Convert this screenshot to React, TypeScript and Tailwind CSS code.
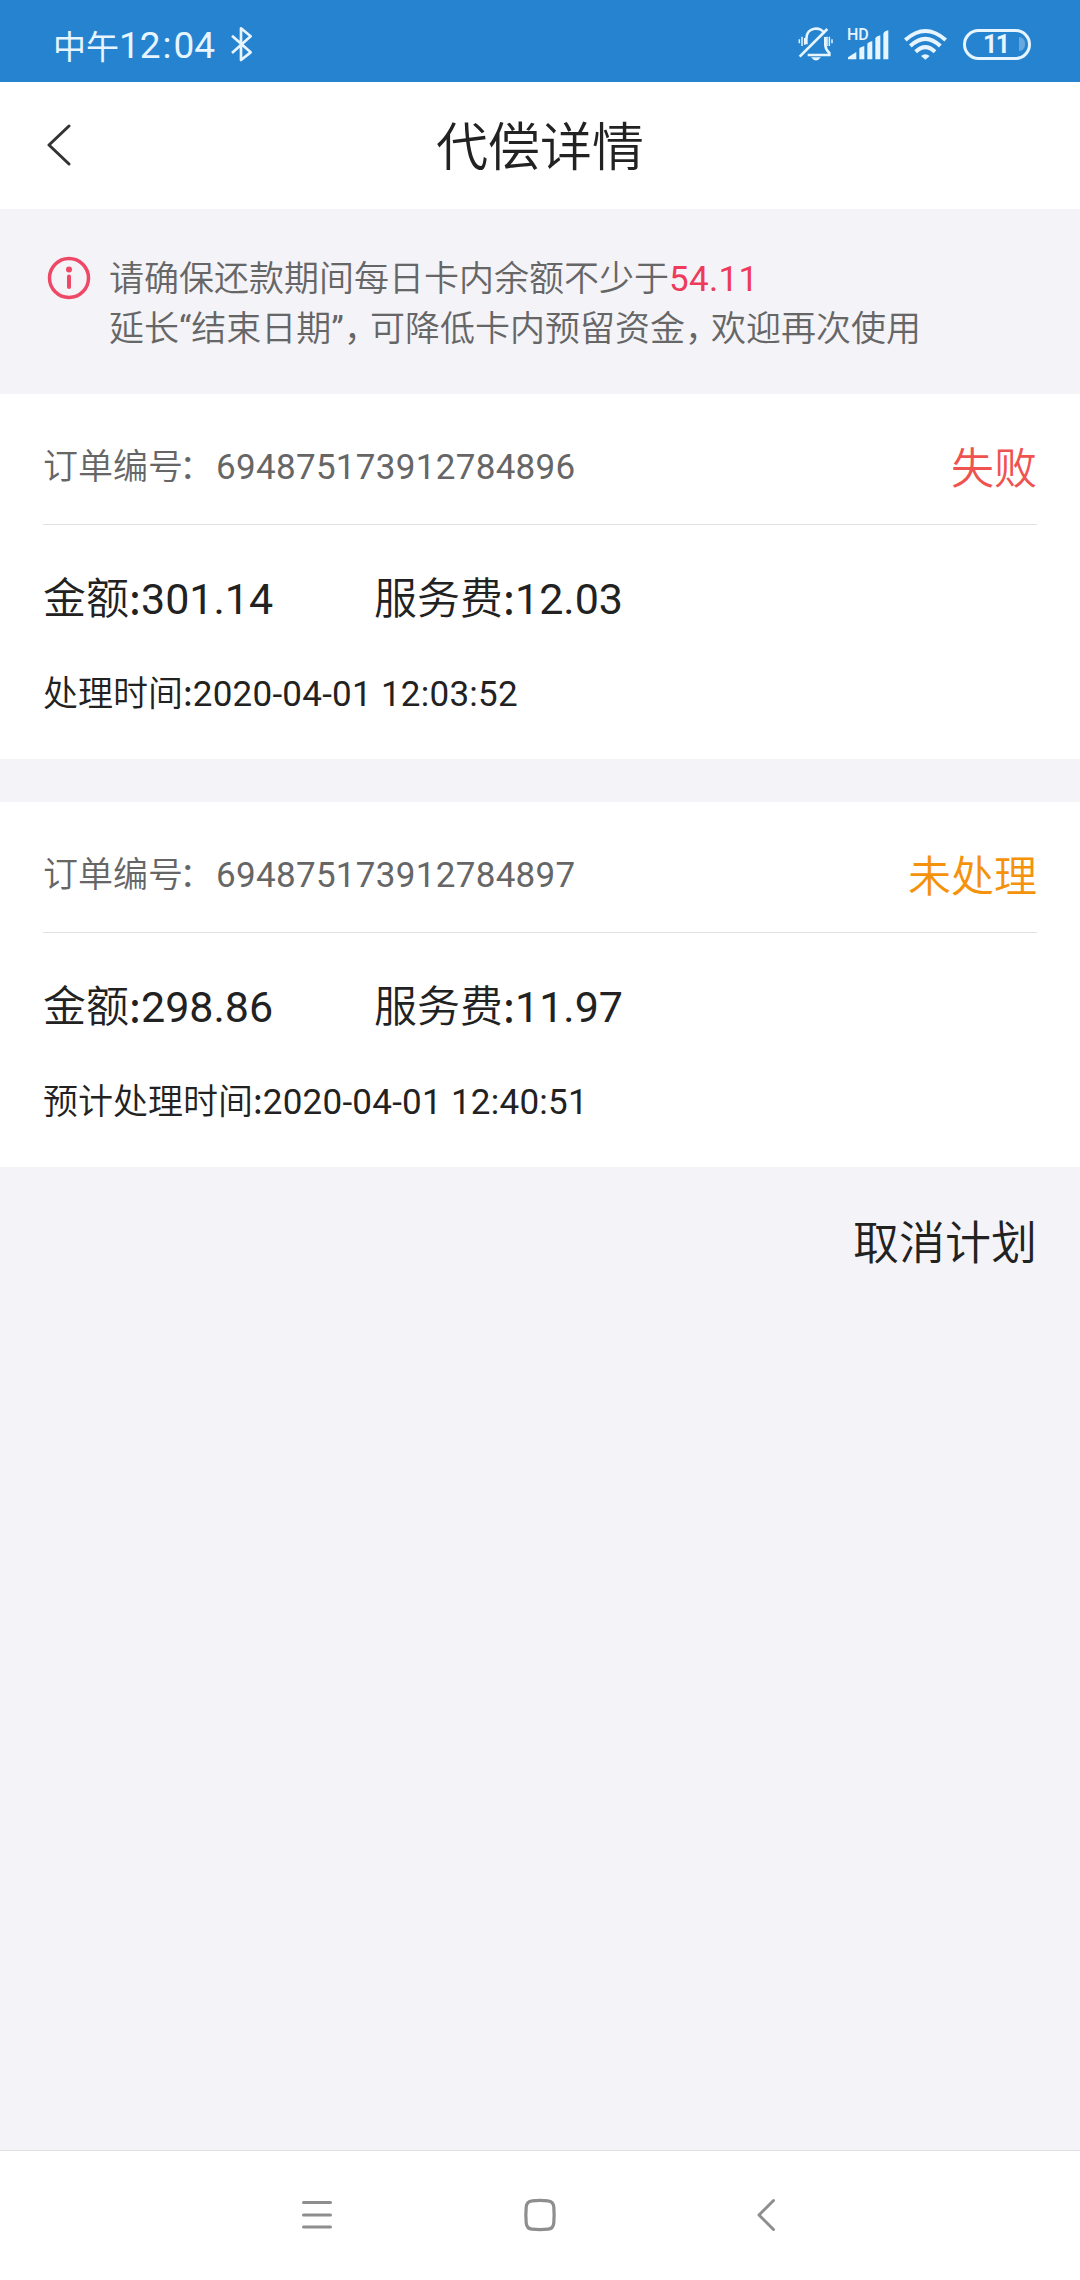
type Order = {
  id: string;
  status: string;
  statusClass: string;
  amount: string;
  fee: string;
  timeLabel: string;
  time: string;
};

const orders: Order[] = [
  {
    id: '694875173912784896',
    status: '失败',
    statusClass: 'text-[#ef5350]',
    amount: '301.14',
    fee: '12.03',
    timeLabel: '处理时间',
    time: '2020-04-01 12:03:52',
  },
  {
    id: '694875173912784897',
    status: '未处理',
    statusClass: 'text-[#f5920b]',
    amount: '298.86',
    fee: '11.97',
    timeLabel: '预计处理时间',
    time: '2020-04-01 12:40:51',
  },
];

function BluetoothIcon() {
  return (
    <svg className="h-[36px] w-[23px]" viewBox="0 0 69 108" fill="none" stroke="currentColor" strokeWidth="8" strokeLinejoin="round">
      <path d="M6 29 L62 79 L33 102 V7 L62 31 L6 81" />
    </svg>
  );
}

function MutedBellIcon() {
  return (
    <svg className="h-[34px] w-[35px]" viewBox="55 80 105 102" fill="none" stroke="currentColor" strokeWidth="8">
      <path d="M80 132 V115 C80 79 126 77 133 99" />
      <path d="M137 110 V134 Q138 148 149 158 V164 H84" />
      <path d="M60 169 L143 86" />
      <path d="M59 117 V129 M67 109 V137 M75 113 V133 M142 109 V137 M149 109 V137 M157 117 V129" strokeWidth="4.5" />
      <path d="M94 171 H124 Q109 190 94 171Z" fill="currentColor" stroke="none" />
    </svg>
  );
}

function SignalIcon() {
  return (
    <div className="relative h-[33px] w-[43px]">
      <svg className="h-[33px] w-[43px]" viewBox="203 80 129 99" fill="currentColor">
        <path d="M206 174 V168 L231 152 V174Z" />
        <path d="M240 174 V142 Q241 138 255 134 V174Z" />
        <path d="M264 174 V127 Q266 123 279 119 V174Z" />
        <path d="M288 174 V110 Q290 106 303 102 V174Z" />
        <path d="M312 174 V97 Q314 90 327 87 V174Z" />
      </svg>
      <span className="absolute top-0 left-0 text-[16px] leading-[14px] font-medium">HD</span>
    </div>
  );
}

function WifiIcon() {
  return (
    <svg className="h-[33px] w-[43px]" viewBox="374 83 129 99" fill="none" stroke="currentColor" strokeWidth="12">
      <path d="M378 119 Q438 65 499 119" />
      <path d="M393 137 Q438 94 483 137" />
      <path d="M409 154 Q438 127 467 154" />
      <path d="M425 167 Q438 156 451 167 L438 178Z" fill="currentColor" stroke="none" />
    </svg>
  );
}

function Battery() {
  return (
    <div className="flex h-[31px] w-[68px] items-center justify-end rounded-full border-[3px] border-current pr-[3px]">
      <span className="w-[36px] pr-[11px] text-center text-[25px] leading-none font-bold tracking-[-1.5px]">11</span>
      <span className="h-[14px] w-[6px] rounded-r-full rounded-l-[2px] bg-white/30" />
    </div>
  );
}

function StatusBar() {
  return (
    <div className="flex h-[82px] items-center bg-[#2683d0] pt-[6px] pr-[49px] pl-[53px] text-[#e6f5ff]">
      <div className="flex items-center pt-[3px]">
        <span className="font-['Noto_Sans_CJK_SC'] text-[33px] leading-none">中午</span>
        <span className="text-[37px] leading-none">
          12<span className="px-[2px]">:</span>04
        </span>
      </div>
      <div className="ml-[15px]">
        <BluetoothIcon />
      </div>
      <div className="ml-auto flex items-center">
        <MutedBellIcon />
        <div className="ml-[14px]">
          <SignalIcon />
        </div>
        <div className="ml-[14px]">
          <WifiIcon />
        </div>
        <div className="ml-[16px]">
          <Battery />
        </div>
      </div>
    </div>
  );
}

function Header() {
  return (
    <div className="grid h-[127px] grid-cols-[100px_1fr_100px] items-center bg-white">
      <svg className="mb-[2px] ml-[46px] h-[42px] w-[25px]" viewBox="0 0 25 42" fill="none" stroke="#333" strokeWidth="3" strokeLinecap="round" strokeLinejoin="round">
        <path d="M23 2 L3 21 L23 40" />
      </svg>
      <h1 className="pt-[6px] text-center text-[52px] leading-none">代偿详情</h1>
    </div>
  );
}

function Notice() {
  return (
    <div className="flex h-[185px] items-start pt-[46px] pl-[47px] text-[35px] leading-[50px] text-[#666]">
      <svg className="mt-px h-[44px] w-[44px]" viewBox="0 0 44 44" fill="none" stroke="#ef4866">
        <circle cx="22" cy="22" r="19.5" strokeWidth="3.5" />
        <path d="M22 20.5 V31" strokeWidth="4" strokeLinecap="round" />
        <circle cx="22" cy="13.5" r="3" fill="#ef4866" stroke="none" />
      </svg>
      <div className="ml-[18px]">
        <p>
          请确保还款期间每日卡内余额不少于<span className="tracking-[0.3px] text-[#ee3b5b]">54.11</span>
        </p>
        <p>
          延长“结束日期”<span className="tracking-[-9px]">，</span>可降低卡内预留资金
          <span className="tracking-[-9px]">，</span>欢迎再次使用
        </p>
      </div>
    </div>
  );
}

function Colon() {
  return <span className="font-['Noto_Sans_CJK_SC']">:</span>;
}

function OrderCard({ order }: { order: Order }) {
  return (
    <div className="h-[365px] bg-white px-[43px]">
      <div className="flex h-[131px] items-center justify-between border-b border-[#e2e2e2] pt-[19px]">
        <span className="text-[35px] text-[#666]">
          订单编<span className="tracking-[-4px]">号</span>
          <span className="mr-[2px]">：</span>
          <span className="tracking-[0.3px]">{order.id}</span>
        </span>
        <span className={`pt-px text-[43px] ${order.statusClass}`}>{order.status}</span>
      </div>
      <div className="flex pt-[40px] text-[43px] leading-[60px]">
        <span className="w-[331px]">
          金额<Colon />
          {order.amount}
        </span>
        <span>
          服务费<Colon />
          {order.fee}
        </span>
      </div>
      <div className="pt-[32px] text-[35px] leading-[60px]">
        {order.timeLabel}
        <Colon />
        <span className="tracking-[0.25px]">{order.time}</span>
      </div>
    </div>
  );
}

function NavigationBar() {
  return (
    <div className="flex h-[130px] items-center border-t border-[#e0e0e3] bg-white pb-[2px] pl-[300px] text-[#8e8e8e]">
      <svg className="h-[34px] w-[34px]" viewBox="0 0 34 34" stroke="currentColor" strokeWidth="3" strokeLinecap="round">
        <path d="M3.5 4.5 H30.5 M3.5 17 H30.5 M3.5 29 H30.5" />
      </svg>
      <svg className="ml-[189px] h-[34px] w-[34px]" viewBox="0 0 34 34" fill="none" stroke="currentColor" strokeWidth="3.2">
        <path d="M9 2.8 Q17 1.9 25 2.8 Q30.2 3.2 30.8 9 Q31.5 17 30.8 25 Q30.2 30.8 25 31.2 Q17 32.1 9 31.2 Q3.8 30.8 3.2 25 Q2.5 17 3.2 9 Q3.8 3.2 9 2.8Z" />
      </svg>
      <svg className="ml-[198px] h-[34px] w-[22px]" viewBox="0 0 22 34" fill="none" stroke="currentColor" strokeWidth="3" strokeLinecap="round" strokeLinejoin="round">
        <path d="M18.5 2.5 L4 17 L18.5 31.5" />
      </svg>
    </div>
  );
}

export default function App() {
  return (
    <div className="flex h-[2280px] w-[1080px] flex-col bg-[#f4f3f8] font-[Roboto,'Noto_Sans_CJK_SC_DemiLight','Noto_Sans_CJK_SC_Light','Noto_Sans_CJK_SC',sans-serif] text-[#222]">
      <StatusBar />
      <Header />
      <Notice />
      <div className="flex flex-col gap-[43px]">
        {orders.map((order) => (
          <OrderCard key={order.id} order={order} />
        ))}
      </div>
      <div className="flex justify-end pt-[46px] pr-[43px]">
        <button className="text-[46px] leading-[60px]">取消计划</button>
      </div>
      <div className="mt-auto">
        <NavigationBar />
      </div>
    </div>
  );
}
